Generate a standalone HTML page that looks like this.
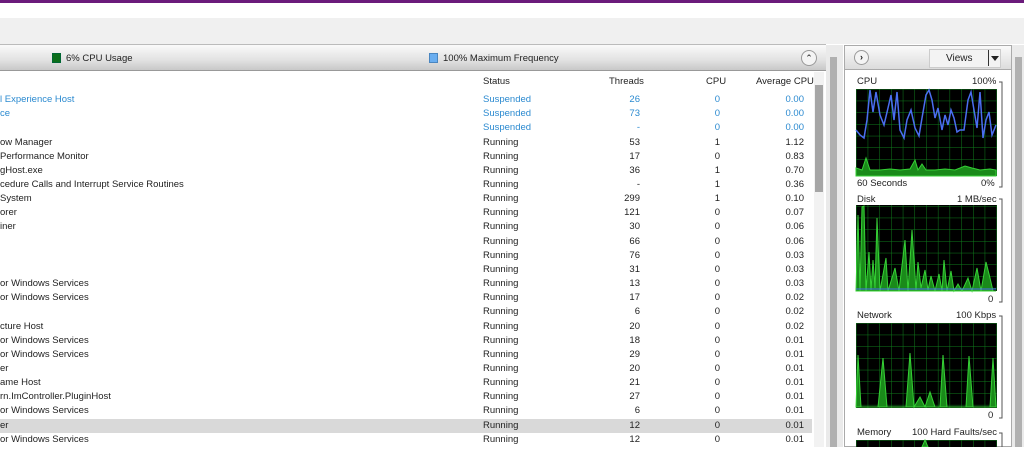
<!DOCTYPE html>
<html><head><meta charset="utf-8"><style>
*{margin:0;padding:0;box-sizing:border-box}
body{width:1024px;height:447px;overflow:hidden;background:#fff;font-family:"Liberation Sans",sans-serif;font-size:9.5px;color:#222;position:relative}
.a{position:absolute;white-space:nowrap}
.r{position:absolute;left:0;width:812px;height:14px;line-height:14px}
.r span{position:absolute}
.n{left:0}.s{left:483px}.t{right:172px}.c{right:92px}.v{right:8px}
.b{color:#2b8ad0}
.hl{background:#d9d9d9}
#rows{position:absolute;left:0;top:2px;width:812px;height:447px}
</style></head><body>
<div class="a" style="left:0;top:0;width:1024px;height:3px;background:#6b1b7b"></div>
<div class="a" style="left:0;top:18px;width:1024px;height:26px;background:#f0f0f0"></div>
<div class="a" style="left:0;top:44px;width:826px;height:1px;background:#bbb"></div>
<div class="a" style="left:0;top:45px;width:826px;height:26px;background:linear-gradient(#fafafa,#e2e2e2 60%,#c8c8c8);border-bottom:1px solid #999"></div>
<div class="a" style="left:52px;top:53px;width:9px;height:10px;background:#0b6e1a;border:1px solid #063"></div>
<div class="a" style="left:66px;top:53px;font-size:9.5px">6% CPU Usage</div>
<div class="a" style="left:429px;top:53px;width:9px;height:10px;background:#6aaef0;border:1px solid #4a86c0"></div>
<div class="a" style="left:443px;top:53px;font-size:9.5px">100% Maximum Frequency</div>
<div class="a" style="left:801px;top:50px;width:16px;height:16px;border-radius:50%;background:#f4f4f4;border:1px solid #999;text-align:center;line-height:14px;font-size:9px">&#8963;</div>
<div class="a" style="left:483px;top:76px">Status</div>
<div class="a" style="left:609px;top:76px">Threads</div>
<div class="a" style="left:706px;top:76px">CPU</div>
<div class="a" style="left:756px;top:76px">Average CPU</div>
<div class="a" style="left:814px;top:72px;width:10px;height:375px;background:#f2f2f2"></div>
<div class="a" style="left:815px;top:85px;width:8px;height:107px;background:#a6a6a6"></div>
<div class="a" style="left:826px;top:45px;width:17px;height:402px;background:#eaeaea"></div>
<div class="a" style="left:830px;top:57px;width:7px;height:390px;background:#b0b0b0"></div>
<div class="a" style="left:1012px;top:45px;width:12px;height:402px;background:#eaeaea"></div>
<div class="a" style="left:1015px;top:57px;width:7px;height:390px;background:#b0b0b0"></div>

<div id="rows">
<div class="r b" style="top:91px"><span class="n">l Experience Host</span><span class="s">Suspended</span><span class="t">26</span><span class="c">0</span><span class="v">0.00</span></div>
<div class="r b" style="top:105px"><span class="n">ce</span><span class="s">Suspended</span><span class="t">73</span><span class="c">0</span><span class="v">0.00</span></div>
<div class="r b" style="top:119px"><span class="s">Suspended</span><span class="t">-</span><span class="c">0</span><span class="v">0.00</span></div>
<div class="r" style="top:134px"><span class="n">ow Manager</span><span class="s">Running</span><span class="t">53</span><span class="c">1</span><span class="v">1.12</span></div>
<div class="r" style="top:148px"><span class="n"> Performance Monitor</span><span class="s">Running</span><span class="t">17</span><span class="c">0</span><span class="v">0.83</span></div>
<div class="r" style="top:162px"><span class="n">gHost.exe</span><span class="s">Running</span><span class="t">36</span><span class="c">1</span><span class="v">0.70</span></div>
<div class="r" style="top:176px"><span class="n">cedure Calls and Interrupt Service Routines</span><span class="s">Running</span><span class="t">-</span><span class="c">1</span><span class="v">0.36</span></div>
<div class="r" style="top:190px"><span class="n">System</span><span class="s">Running</span><span class="t">299</span><span class="c">1</span><span class="v">0.10</span></div>
<div class="r" style="top:204px"><span class="n">orer</span><span class="s">Running</span><span class="t">121</span><span class="c">0</span><span class="v">0.07</span></div>
<div class="r" style="top:218px"><span class="n">iner</span><span class="s">Running</span><span class="t">30</span><span class="c">0</span><span class="v">0.06</span></div>
<div class="r" style="top:233px"><span class="s">Running</span><span class="t">66</span><span class="c">0</span><span class="v">0.06</span></div>
<div class="r" style="top:247px"><span class="s">Running</span><span class="t">76</span><span class="c">0</span><span class="v">0.03</span></div>
<div class="r" style="top:261px"><span class="s">Running</span><span class="t">31</span><span class="c">0</span><span class="v">0.03</span></div>
<div class="r" style="top:275px"><span class="n">or Windows Services</span><span class="s">Running</span><span class="t">13</span><span class="c">0</span><span class="v">0.03</span></div>
<div class="r" style="top:289px"><span class="n">or Windows Services</span><span class="s">Running</span><span class="t">17</span><span class="c">0</span><span class="v">0.02</span></div>
<div class="r" style="top:303px"><span class="s">Running</span><span class="t">6</span><span class="c">0</span><span class="v">0.02</span></div>
<div class="r" style="top:318px"><span class="n">cture Host</span><span class="s">Running</span><span class="t">20</span><span class="c">0</span><span class="v">0.02</span></div>
<div class="r" style="top:332px"><span class="n">or Windows Services</span><span class="s">Running</span><span class="t">18</span><span class="c">0</span><span class="v">0.01</span></div>
<div class="r" style="top:346px"><span class="n">or Windows Services</span><span class="s">Running</span><span class="t">29</span><span class="c">0</span><span class="v">0.01</span></div>
<div class="r" style="top:360px"><span class="n">er</span><span class="s">Running</span><span class="t">20</span><span class="c">0</span><span class="v">0.01</span></div>
<div class="r" style="top:374px"><span class="n">ame Host</span><span class="s">Running</span><span class="t">21</span><span class="c">0</span><span class="v">0.01</span></div>
<div class="r" style="top:388px"><span class="n">rn.ImController.PluginHost</span><span class="s">Running</span><span class="t">27</span><span class="c">0</span><span class="v">0.01</span></div>
<div class="r" style="top:402px"><span class="n">or Windows Services</span><span class="s">Running</span><span class="t">6</span><span class="c">0</span><span class="v">0.01</span></div>
<div class="r hl" style="top:417px"><span class="n">er</span><span class="s">Running</span><span class="t">12</span><span class="c">0</span><span class="v">0.01</span></div>
<div class="r" style="top:431px"><span class="n">or Windows Services</span><span class="s">Running</span><span class="t">12</span><span class="c">0</span><span class="v">0.01</span></div>
</div>

<div class="a" style="left:844px;top:45px;width:168px;height:402px;border:1px solid #aaa;background:#fff"></div>
<div class="a" style="left:845px;top:46px;width:166px;height:24px;background:linear-gradient(#fafafa,#dcdcdc);border-bottom:1px solid #aaa"></div>
<div class="a" style="left:854px;top:50px;width:15px;height:15px;border-radius:50%;background:#f4f4f4;border:1px solid #999;text-align:center;line-height:13px;font-size:9px;font-weight:bold">&#8250;</div>
<div class="a" style="left:929px;top:49px;width:72px;height:19px;background:#f3f3f3;border:1px solid #ccc"></div>
<div class="a" style="left:946px;top:53px;font-size:10px">Views</div>
<div class="a" style="left:988px;top:50px;width:1px;height:16px;background:#333"></div>
<div class="a" style="left:991px;top:56px;width:0;height:0;border-left:4px solid transparent;border-right:4px solid transparent;border-top:5px solid #222"></div>

<div class="a" style="left:857px;top:76px">CPU</div><div class="a" style="left:972px;top:76px">100%</div>
<div class="a" style="left:857px;top:178px">60 Seconds</div><div class="a" style="left:981px;top:178px">0%</div>
<div class="a" style="left:857px;top:194px">Disk</div><div class="a" style="left:957px;top:194px">1 MB/sec</div>
<div class="a" style="left:988px;top:294px">0</div>
<div class="a" style="left:857px;top:310px">Network</div><div class="a" style="left:956px;top:310px">100 Kbps</div>
<div class="a" style="left:988px;top:410px">0</div>
<div class="a" style="left:857px;top:427px">Memory</div><div class="a" style="left:912px;top:427px">100 Hard Faults/sec</div>

<svg class="a" style="left:0;top:0" width="1024" height="447">
<defs>
<pattern id="g" x="856" y="89" width="11.7" height="11.7" patternUnits="userSpaceOnUse"><rect width="11.7" height="11.7" fill="#000"/><path d="M0 0H11.7M0 0V11.7" stroke="#0f7d1c" stroke-width="1"/></pattern>
</defs>
<g fill="none" stroke="#555" stroke-width="1">
<path d="M999 82H1002V187H999"/><path d="M999 199H1002V302H999"/><path d="M999 316H1002V418H999"/><path d="M999 433H1002V447"/>
</g>
<rect x="856" y="89" width="141" height="87" fill="url(#g)"/>
<rect x="856" y="205" width="141" height="86" fill="url(#g)"/>
<rect x="856" y="323" width="141" height="85" fill="url(#g)"/>
<rect x="856" y="440" width="141" height="7" fill="url(#g)"/>
<polyline fill="none" stroke="#4a6ef0" stroke-width="1.5" points="856,130 860,135 864,138 867,120 870,90 873,112 876,92 880,115 884,125 888,108 891,95 894,120 897,92 900,130 904,138 907,120 911,110 915,128 919,136 922,118 926,95 929,90 932,100 935,118 938,108 942,130 945,115 948,125 951,110 954,118 957,132 960,130 964,130 968,100 971,92 974,110 977,128 980,92 983,138 986,120 989,112 992,135 996,125"/>
<path fill="#1a8a1a" stroke="#36d036" stroke-width="1" d="M856,176 L856,168 L862,170 L866,158 L870,170 L880,170 L890,169 L900,170 L910,169 L915,160 L918,170 L922,164 L926,170 L935,170 L945,169 L955,170 L965,166 L972,168 L980,170 L990,169 L996,170 L996,176Z"/>
<path fill="#1a8a1a" stroke="#36d036" stroke-width="1" d="M856,291 L858,215 L860,291 L862,207 L864,206 L866,291 L869,252 L871,290 L873,260 L875,288 L877,218 L880,291 L886,258 L888,291 L892,278 L895,268 L899,291 L905,240 L908,291 L912,230 L916,290 L918,262 L921,288 L925,270 L928,290 L931,276 L935,291 L939,274 L942,291 L944,260 L947,291 L951,271 L954,291 L958,284 L962,291 L968,278 L972,291 L977,268 L981,291 L986,262 L990,278 L993,291 L996,291Z"/>
<path fill="none" stroke="#4a6ef0" stroke-width="1" d="M856,289 L996,289"/>
<path fill="#1a8a1a" stroke="#36d036" stroke-width="1" d="M856,407 L858,355 L861,407 L878,407 L883,358 L887,407 L906,407 L910,353 L914,407 L920,397 L925,407 L930,392 L935,407 L940,407 L943,355 L947,407 L966,407 L969,356 L973,407 L990,407 L993,358 L996,407Z"/>
<path fill="#1a8a1a" stroke="#36d036" d="M922,447 L925,440 L928,447Z"/>
</svg>
</body></html>
